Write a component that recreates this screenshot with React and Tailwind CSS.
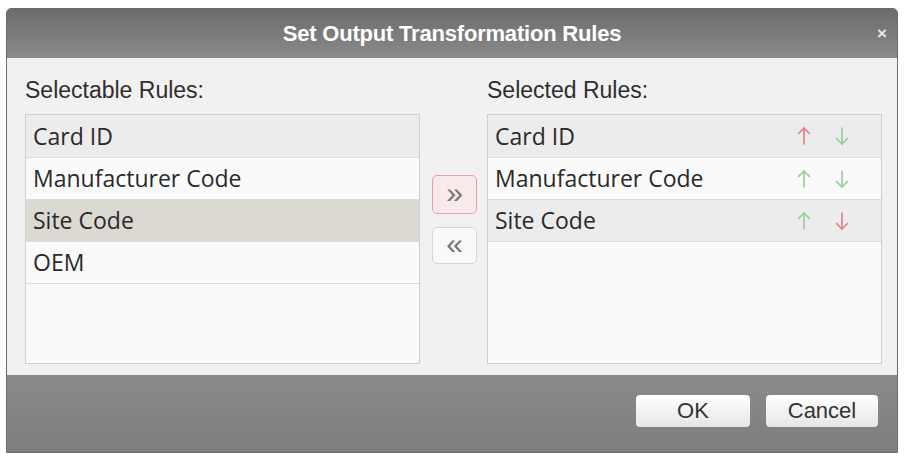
const selectable = ['Card ID', 'Manufacturer Code', 'Site Code', 'OEM'];
const selected = [
    { name: 'Card ID', up: 'red', down: 'green' },
    { name: 'Manufacturer Code', up: 'green', down: 'green' },
    { name: 'Site Code', up: 'green', down: 'red' }
];

const arrowColor = { red: '#e07f86', green: '#94cc96' };

function Arrow({ dir, color }) {
    return (
        <svg width="14" height="20" viewBox="0 0 14 20" fill="none" stroke={arrowColor[color]} strokeWidth="1.6" strokeLinecap="round" strokeLinejoin="round">
            {dir === 'up' ? (
                <>
                    <path d="M7 2 L7 18" />
                    <path d="M1.5 7.5 L7 2 L12.5 7.5" />
                </>
            ) : (
                <>
                    <path d="M7 2 L7 18" />
                    <path d="M1.5 12.5 L7 18 L12.5 12.5" />
                </>
            )}
        </svg>
    );
}

export default function App() {
    const rowText = "text-[23px] text-[#2a2a2a] [font-family:'Open_Sans','Noto_Sans',sans-serif]";

    return (
        <div className="w-[906px] h-[456px] bg-white pt-[8px] pl-[6px] [font-family:'Liberation_Sans',Arial,sans-serif]">
            <div className="w-[892px] h-[445px] flex flex-col rounded-t-[5px] border border-[#6a6a6a] overflow-hidden">
                {/* Title bar */}
                <div className="h-[49px] shrink-0 relative flex items-center justify-center bg-gradient-to-b from-[#6c6c6c] to-[#8a8a8a]">
                    <span className="text-[22px] font-bold text-white tracking-[-0.2px]">Set Output Transformation Rules</span>
                    <span className="absolute right-[10px] top-[12px] text-[17px] font-bold text-[#e8e8e8]">×</span>
                </div>

                {/* Body */}
                <div className="flex-1 bg-[#f1f1f1] pt-[19px] pl-[18px] pr-[15px] flex">
                    <div className="flex flex-col">
                        <div className="h-[26px] leading-[26px] text-[23px] text-[#2e2e2e] mb-[11px]">Selectable Rules:</div>
                        <div className="w-[395px] h-[250px] border border-[#cfcfcf] bg-[#fafafa]">
                            {selectable.map((name, i) => (
                                <div
                                    key={name}
                                    className={
                                        'flex items-center pl-[7px] border-b border-[#dcdcdc] ' +
                                        (i === 0 ? 'h-[43px] bg-[#ececec] ' : 'h-[42px] ') +
                                        (i === 2 ? 'bg-[#dcd9d2] ' : '') +
                                        (i === 1 || i === 3 ? 'bg-[#fafafa]' : '')
                                    }
                                >
                                    <span className={rowText}>{name}</span>
                                </div>
                            ))}
                        </div>
                    </div>

                    <div className="flex flex-col gap-[13px] pt-[98px] ml-[12px] mr-[10px]">
                        <button className="w-[45px] h-[39px] rounded-[5px] border border-[#e3a2aa] bg-[#f8e9eb] text-[30px] leading-none text-[#777] flex items-center justify-center pb-[4px]">»</button>
                        <button className="w-[45px] h-[37px] rounded-[5px] border border-[#d6d6d6] bg-[#f9f9f9] text-[30px] leading-none text-[#777] flex items-center justify-center pb-[4px]">«</button>
                    </div>

                    <div className="flex flex-col">
                        <div className="h-[26px] leading-[26px] text-[23px] text-[#2e2e2e] mb-[11px]">Selected Rules:</div>
                        <div className="w-[395px] h-[250px] border border-[#cfcfcf] bg-[#fafafa]">
                            {selected.map((r, i) => (
                                <div
                                    key={r.name}
                                    className={
                                        'flex items-center pl-[7px] pr-[32px] border-b border-[#dcdcdc] ' +
                                        (i === 0 ? 'h-[43px] ' : 'h-[42px] ') +
                                        (i === 1 ? 'bg-[#fafafa]' : 'bg-[#ececec]')
                                    }
                                >
                                    <span className={rowText}>{r.name}</span>
                                    <div className="ml-auto flex items-center gap-[24px]">
                                        <Arrow dir="up" color={r.up} />
                                        <Arrow dir="down" color={r.down} />
                                    </div>
                                </div>
                            ))}
                        </div>
                    </div>
                </div>

                {/* Footer */}
                <div className="h-[77px] shrink-0 bg-gradient-to-b from-[#8a8a8a] to-[#7e7e7e] flex items-center justify-end gap-[16px] pr-[19px] pb-[6px]">
                    <button className="w-[114px] h-[32px] rounded-[4px] bg-gradient-to-b from-white to-[#e6e6e6] text-[22px] text-[#333] leading-none">OK</button>
                    <button className="w-[112px] h-[32px] rounded-[4px] bg-gradient-to-b from-white to-[#e6e6e6] text-[22px] text-[#333] leading-none">Cancel</button>
                </div>
            </div>
        </div>
    );
}
